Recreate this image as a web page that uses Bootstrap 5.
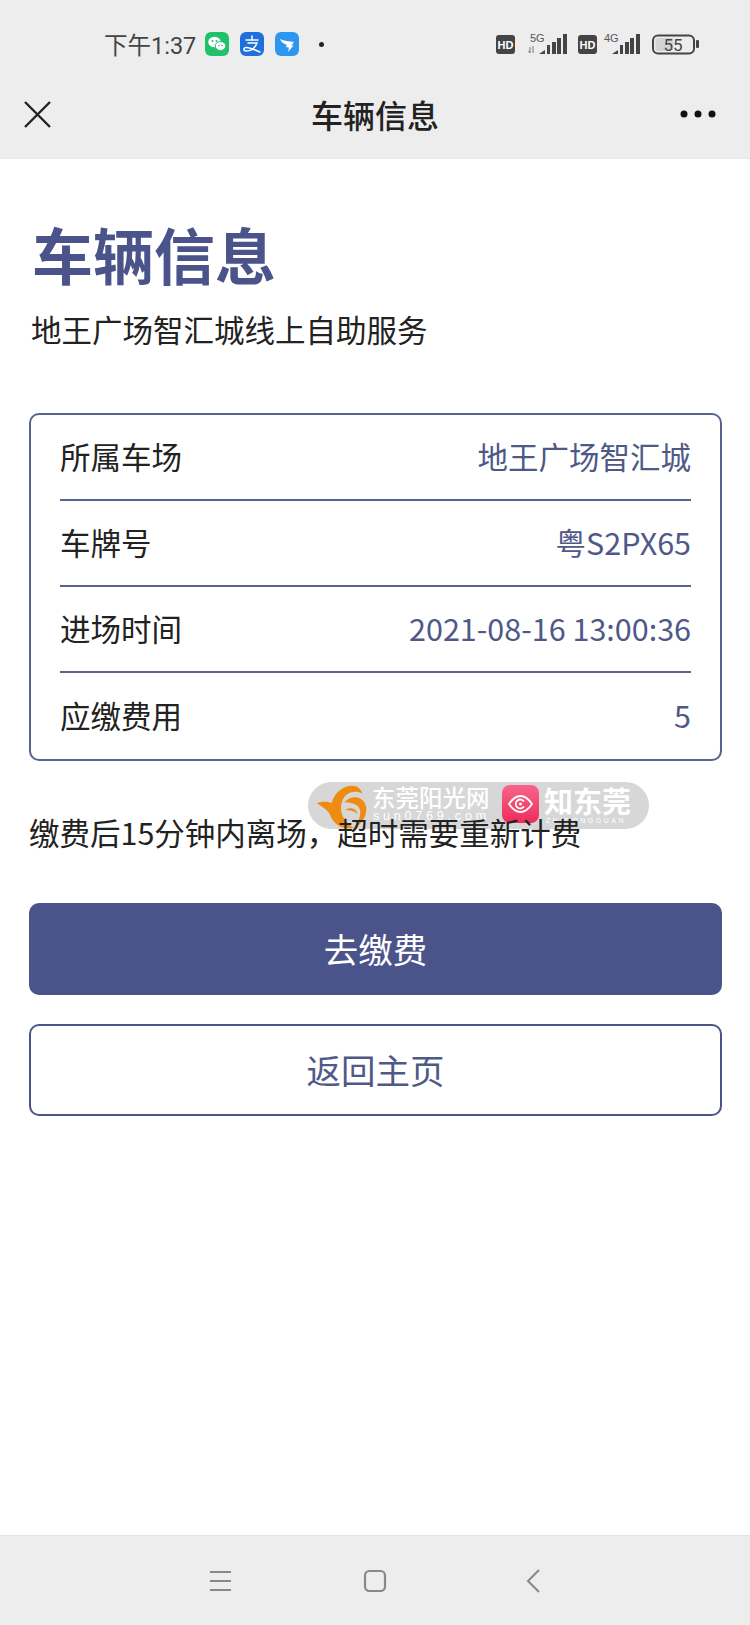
<!DOCTYPE html>
<html lang="zh">
<head>
<meta charset="utf-8">
<title>车辆信息</title>
<link rel="stylesheet" href="https://cdn.jsdelivr.net/npm/bootstrap@5.3.0/dist/css/bootstrap.min.css">
<style>
html,body{margin:0;background:#fff}
body{font-family:"Noto Sans CJK SC","Liberation Sans",sans-serif;color:#222;width:750px;height:1625px;position:relative;overflow:hidden}
.shell{height:1625px}
.topbar{background:#ededed;height:159px;border-bottom:1px solid #e6e6e6}
.statusrow{height:78px;padding:32px 50px 0 104px}
.clock{font-size:23.5px;line-height:26px;color:#444;width:93px;margin-top:1px;white-space:nowrap;font-family:"Roboto","Noto Sans CJK SC",sans-serif}
.appicon{width:24px;height:24px;display:block}
.wechaticon{margin-left:8px}
.payicon{margin-left:11px}
.notifdot{width:5px;height:5px;border-radius:50%;background:#222;margin:10px 0 0 20px}
.signalgroup{height:24px}
.signalgroup svg{display:block}
.titlerow{height:72px;padding:0 26px}
.titletext{font-size:32px;line-height:44px;color:#222;font-weight:500}
.sideslot{width:60px}
.closeicon{display:block;margin-left:-2px}
.moreicon{display:block;margin-right:8px}
.mainpane{padding:50px 28px 0 29px}
.bigtitle{font-size:61px;line-height:84px;font-weight:700;color:#4a548a;margin:3px 0 0 3px}
.subtitle{font-size:30.5px;line-height:44px;color:#222;margin:11px 0 62px 2px}
.infobox{border:2px solid #5a638f;border-radius:10px;padding:0 29px;height:348px}
.inforow{height:86px;font-size:30.5px;color:#222;border-bottom:2px solid #5a638f}
.inforow:last-child{border-bottom:0}
.infoval{color:#4f5988}
.noticeline{font-size:30.5px;line-height:44px;color:#222;margin:49px 0 49px 0;position:relative;z-index:6}
.actionbtn{display:block;width:100%;height:92px;font-size:34.5px;border-radius:10px;border:2px solid #4a548a;padding:0}
.primaryact{background:#4a548a;color:#fff;margin-bottom:29px}
.secondact{background:#fff;color:#4f5988}
.bottomnav{position:absolute;left:0;right:0;bottom:0;height:90px;background:#ededed;border-top:1px solid #e2e2e2;padding-top:1px}
.bottomnav svg{display:block}
.stamp{position:absolute;left:308px;top:782px;width:341px;height:47px;border-radius:24px;background:rgba(200,200,200,.72);color:#fff;z-index:5}
.stampcn{position:absolute;white-space:nowrap}
.stampsun{left:64px;top:1px;font-size:23.5px;line-height:28px;font-weight:500}
.stampknow{left:236px;top:2px;font-size:29px;line-height:32px;font-weight:700}
.stampen{position:absolute;white-space:nowrap;font-family:"Liberation Sans",sans-serif}
.stampdomain{left:65px;top:29px;font-size:12.5px;line-height:11px;letter-spacing:3.8px}
.stampsmall{left:238px;top:35px;font-size:7px;line-height:7px;letter-spacing:2.5px}
.stampsvg{position:absolute;display:block}
.stamplogo{left:-3px;top:-7px}
.stamppink{left:194px;top:3px}
</style>
</head>
<body>
<div class="shell d-flex flex-column">
  <header class="topbar">
    <div class="statusrow d-flex align-items-start">
      <div class="clock">下午1:37</div>
      <svg class="appicon wechaticon" viewBox="0 0 24 24"><rect width="24" height="24" rx="6" fill="#1fc16b"/><ellipse cx="9.5" cy="10" rx="6.3" ry="5.3" fill="#fff"/><ellipse cx="15.5" cy="14" rx="5.3" ry="4.5" fill="#fff" stroke="#1fc16b"/><circle cx="7.5" cy="9" r="1" fill="#1fc16b"/><circle cx="11.5" cy="9" r="1" fill="#1fc16b"/><circle cx="14" cy="13.5" r=".8" fill="#1fc16b"/><circle cx="17" cy="13.5" r=".8" fill="#1fc16b"/></svg>
      <svg class="appicon payicon" viewBox="0 0 24 24"><rect width="24" height="24" rx="6" fill="#1f6fdc"/><path d="M6 8h12M12 4v4M8 11h9C15 16 11 19 6.5 19C3 19 3 15.5 6.5 15.5C10 15.5 15 18 20 20" fill="none" stroke="#fff" stroke-width="1.5" stroke-linecap="round"/></svg>
      <svg class="appicon payicon" viewBox="0 0 24 24"><rect width="24" height="24" rx="6" fill="#2e96ee"/><path d="M5 7C9 9 14 9.5 19 10L16.5 13.5H18.5L13 20L14 15.5L10.5 15L12 13C9 12 6 10 5 7Z" fill="#fff"/></svg>
      <div class="notifdot"></div>
      <div class="signalgroup ms-auto">
        <svg width="205" height="24" viewBox="0 0 205 24">
          <rect x="1" y="3" width="19" height="19" rx="3" fill="#444"/>
          <text x="10.5" y="17" text-anchor="middle" font-size="11" font-weight="700" fill="#fff" font-family="Liberation Sans">HD</text>
          <text x="35" y="9.5" font-size="11" fill="#555" font-family="Liberation Sans">5G</text>
          <path d="M35 15v6M33.3 19l1.7 2M38 14v7" stroke="#777" stroke-width="1" fill="none"/>
          <path d="M44 22l6-4v4zM52 22v-9h3v9zM57 22v-12h4v12zM62 22v-16h4v16zM68 22V2h4v20z" fill="#444"/>
          <rect x="83" y="3" width="19" height="19" rx="3" fill="#444"/>
          <text x="92.5" y="17" text-anchor="middle" font-size="11" font-weight="700" fill="#fff" font-family="Liberation Sans">HD</text>
          <text x="109" y="9.5" font-size="11" fill="#555" font-family="Liberation Sans">4G</text>
          <path d="M117 22l6-4v4zM125 22v-9h3v9zM130 22v-12h4v12zM135 22v-16h4v16zM141 22V2h4v20z" fill="#444"/>
          <rect x="158" y="3.5" width="41" height="18" rx="5" fill="none" stroke="#444" stroke-width="2"/>
          <rect x="160.5" y="6" width="18" height="13" rx="2" fill="#d4d4d4"/>
          <text x="178" y="18.5" text-anchor="middle" font-size="17" fill="#444" font-family="Roboto">55</text>
          <rect x="201" y="8" width="3" height="8" rx="1" fill="#444"/>
        </svg>
      </div>
    </div>
    <div class="titlerow d-flex align-items-center justify-content-between">
      <div class="sideslot">
        <svg class="closeicon" width="27" height="27" viewBox="0 0 27 27"><path d="M1 1l25 25M26 1L1 26" stroke="#222" stroke-width="2.4" fill="none"/></svg>
      </div>
      <div class="titletext">车辆信息</div>
      <div class="sideslot d-flex justify-content-end">
        <svg class="moreicon" width="36" height="8" viewBox="0 0 36 8"><circle cx="4" cy="4" r="3.5" fill="#111"/><circle cx="18" cy="4" r="3.5" fill="#111"/><circle cx="32" cy="4" r="3.5" fill="#111"/></svg>
      </div>
    </div>
  </header>
  <main class="mainpane">
    <h1 class="bigtitle">车辆信息</h1>
    <p class="subtitle">地王广场智汇城线上自助服务</p>
    <section class="infobox">
      <div class="inforow d-flex justify-content-between align-items-center"><span>所属车场</span><span class="infoval">地王广场智汇城</span></div>
      <div class="inforow d-flex justify-content-between align-items-center"><span>车牌号</span><span class="infoval">粤S2PX65</span></div>
      <div class="inforow d-flex justify-content-between align-items-center"><span>进场时间</span><span class="infoval">2021-08-16 13:00:36</span></div>
      <div class="inforow d-flex justify-content-between align-items-center"><span>应缴费用</span><span class="infoval">5</span></div>
    </section>
    <p class="noticeline">缴费后15分钟内离场，超时需要重新计费</p>
    <button type="button" class="btn actionbtn primaryact">去缴费</button>
    <button type="button" class="btn actionbtn secondact">返回主页</button>
  </main>
</div>

<div class="stamp">
  <svg class="stampsvg stamplogo" width="70" height="60" viewBox="0 0 210 180">
    <path d="M35 85C55 78 68 80 80 84C88 55 112 32 142 32C158 32 168 42 172 56C150 44 122 52 112 78C100 108 115 140 145 158C115 165 88 150 76 122C72 108 55 98 35 85Z" fill="#ee8c12"/>
    <path d="M118 82C135 62 165 62 178 82C192 105 180 145 145 160C165 135 172 110 160 95C150 85 132 82 118 82Z" fill="#ee8c12"/>
    <path d="M120 105C135 95 155 100 158 118C150 108 135 105 120 105Z" fill="#ee8c12"/>
  </svg>
  <div class="stampcn stampsun">东莞阳光网</div>
  <div class="stampen stampdomain">sun0769.com</div>
  <svg class="stampsvg stamppink" width="37" height="38" viewBox="0 0 37 38">
    <defs><linearGradient id="pinkgrad" x1="0" y1="0" x2="0" y2="1"><stop offset="0" stop-color="#f7668a"/><stop offset="1" stop-color="#ee2d5c"/></linearGradient></defs>
    <rect width="37" height="38" rx="8" fill="url(#pinkgrad)"/>
    <path d="M7 19C11 13 15 11 18.5 11S26 13 30 19C26 25 22 27 18.5 27S11 25 7 19z" fill="none" stroke="#fff" stroke-width="1.8"/>
    <path d="M22 16.5A4.5 4.5 0 1 0 22 21.5" fill="none" stroke="#fff" stroke-width="1.8"/>
    <circle cx="18.5" cy="19" r="1.5" fill="#fff"/>
  </svg>
  <div class="stampcn stampknow">知东莞</div>
  <div class="stampen stampsmall">ZHIDONGGUAN</div>
</div>

<nav class="bottomnav">
  <svg width="750" height="88" viewBox="0 0 750 88">
    <path d="M210 35h21M210 44h21M210 53h21" stroke="#888" stroke-width="2" fill="none"/>
    <rect x="365" y="34" width="20" height="20" rx="4.5" fill="none" stroke="#888" stroke-width="2.2"/>
    <path d="M539 33L528 44l11 11" stroke="#888" stroke-width="2" fill="none"/>
  </svg>
</nav>
</body>
</html>
